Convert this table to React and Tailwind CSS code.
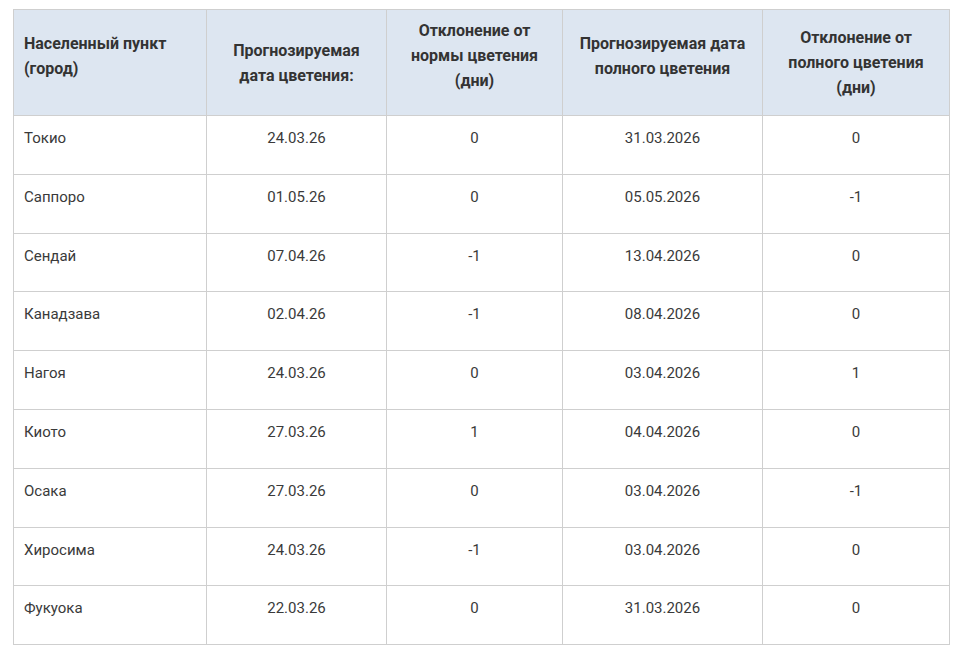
const rows = [
  ["Токио", "24.03.26", "0", "31.03.2026", "0"],
  ["Саппоро", "01.05.26", "0", "05.05.2026", "-1"],
  ["Сендай", "07.04.26", "-1", "13.04.2026", "0"],
  ["Канадзава", "02.04.26", "-1", "08.04.2026", "0"],
  ["Нагоя", "24.03.26", "0", "03.04.2026", "1"],
  ["Киото", "27.03.26", "1", "04.04.2026", "0"],
  ["Осака", "27.03.26", "0", "03.04.2026", "-1"],
  ["Хиросима", "24.03.26", "-1", "03.04.2026", "0"],
  ["Фукуока", "22.03.26", "0", "31.03.2026", "0"],
];

const th = "border border-[#cfcfcf] px-[10px] text-[16px] font-bold leading-[25px] text-[#333]";

export default function App() {
  return (
    <div className="bg-white min-h-[655px] pt-[9px] pl-[13px] font-['Roboto','Liberation_Sans',sans-serif]">
      <table className="w-[936px] border-collapse table-fixed text-[15px] text-[#3a3a3a]">
        <thead>
          <tr className="bg-[#dde6f1] h-[106px]">
            <th className={`w-[193px] pb-[14px] text-left ${th}`}>
              Населенный пункт
              <br />
              (город)
            </th>
            <th className={`w-[180px] text-center ${th}`}>
              Прогнозируемая дата цветения:
            </th>
            <th className={`w-[176px] pb-[14px] text-center ${th}`}>
              Отклонение от нормы цветения (дни)
            </th>
            <th className={`w-[200px] pb-[14px] text-center ${th}`}>
              Прогнозируемая дата полного цветения
            </th>
            <th className={`w-[187px] text-center ${th}`}>
              Отклонение от полного цветения (дни)
            </th>
          </tr>
        </thead>
        <tbody>
          {rows.map((r, i) => (
            <tr key={i} className="h-[58.8px]">
              {r.map((c, j) => (
                <td
                  key={j}
                  className={`border border-[#cfcfcf] px-[10px] pt-[11px] pb-[24px] align-top leading-[22px] ${
                    j === 0 ? "text-left" : "text-center"
                  }`}
                >
                  {c}
                </td>
              ))}
            </tr>
          ))}
        </tbody>
      </table>
    </div>
  );
}
